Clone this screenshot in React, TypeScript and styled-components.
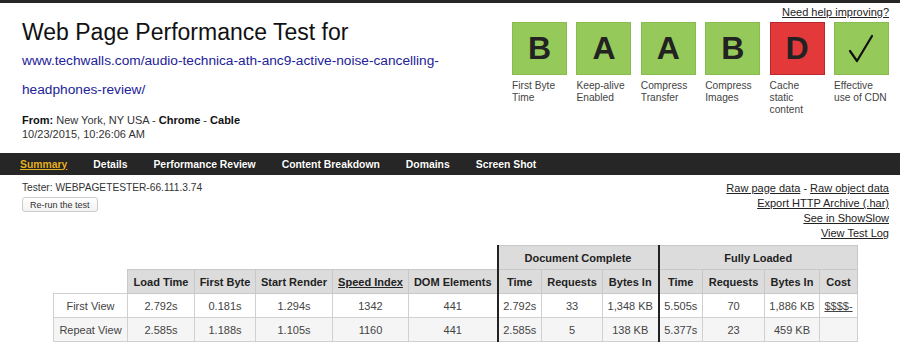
import styled, { createGlobalStyle } from 'styled-components';

const GlobalStyle = createGlobalStyle`
  body {
    margin: 0;
    background: #fff;
    font-family: "Liberation Sans", Arial, Helvetica, sans-serif;
    color: #222;
  }
`;

const Page = styled.div`
  border-top: 3px solid #262626;
`;

const Header = styled.div`
  height: 150px;
  display: flex;
  justify-content: space-between;
  padding: 0 11px 0 22px;
`;

const Intro = styled.div`
  display: flex;
  flex-direction: column;
`;

const Title = styled.h1`
  margin: 17px 0 0;
  font-size: 23px;
  line-height: 24px;
  font-weight: normal;
  color: #111;
`;

const Url = styled.a`
  display: block;
  width: 430px;
  margin-top: 2px;
  font-size: 13.7px;
  line-height: 29px;
  color: #222299;
  text-decoration: none;
`;

const Meta = styled.div`
  margin-top: 9px;
  font-size: 11px;
  line-height: 14px;
  color: #333;

  b {
    color: #111;
  }
`;

const Optimization = styled.div`
  display: flex;
  flex-direction: column;
  align-items: flex-end;
`;

const HelpLink = styled.a`
  margin-top: 3px;
  font-size: 11px;
  line-height: 13px;
  color: #222;
  text-decoration: underline;
`;

const Grades = styled.ul`
  display: flex;
  gap: 9.4px;
  margin: 3px 0 0;
  padding: 0;
  list-style: none;
`;

const Grade = styled.li`
  width: 55px;
`;

const GradeBox = styled.div<{ $bad?: boolean }>`
  box-sizing: border-box;
  height: 53px;
  display: flex;
  align-items: center;
  justify-content: center;
  background: ${(p) => (p.$bad ? '#e3393b' : '#95ca5a')};
  border: 1px solid ${(p) => (p.$bad ? '#b62a2c' : '#88bb50')};
  font-size: 32px;
  font-weight: bold;
  color: #222;
`;

const GradeLabel = styled.div`
  margin-top: 5px;
  font-size: 10.2px;
  line-height: 12px;
  color: #444;
`;

const Nav = styled.nav`
  height: 22px;
  display: flex;
  align-items: center;
  gap: 26px;
  padding-left: 20px;
  background: #262626;
`;

const NavItem = styled.a<{ $active?: boolean }>`
  font-size: 10.4px;
  font-weight: bold;
  color: ${(p) => (p.$active ? '#e6b325' : '#fff')};
  text-decoration: ${(p) => (p.$active ? 'underline' : 'none')};
  text-shadow: 0 0 1px rgba(0, 0, 0, 0.8);
`;

const Content = styled.div`
  padding: 6px 11px 0 22px;
`;

const InfoRow = styled.div`
  display: flex;
  justify-content: space-between;
`;

const Tester = styled.div`
  font-size: 10.2px;
  line-height: 14px;
  color: #333;
`;

const RerunButton = styled.button`
  display: block;
  margin-top: 2px;
  height: 15px;
  padding: 0 7px;
  font-family: inherit;
  font-size: 9px;
  color: #333;
  background: linear-gradient(#fff, #f2f2f2);
  border: 1px solid #ccc;
  border-radius: 3px;
`;

const Links = styled.div`
  display: flex;
  flex-direction: column;
  align-items: flex-end;
  font-size: 11px;
  line-height: 15px;
  color: #222;

  a {
    color: #222;
    text-decoration: underline;
  }
`;

const Results = styled.table`
  margin: 4px auto 0;
  border-collapse: collapse;
  table-layout: fixed;
  font-size: 11px;
`;

const Blank = styled.th`
  border: none;
  background: none;
`;

const Head = styled.th<{ $split?: boolean; $link?: boolean }>`
  height: 23px;
  padding: 0;
  background: #dcdcdc;
  border: 1px solid #c8c8c8;
  border-left: ${(p) => (p.$split ? '2px solid #222' : '1px solid #c8c8c8')};
  font-weight: bold;
  color: #222;
  text-align: center;
  white-space: nowrap;
  text-decoration: ${(p) => (p.$link ? 'underline' : 'none')};
`;

const Row = styled.tr<{ $alt?: boolean }>`
  background: ${(p) => (p.$alt ? '#f5f5f5' : '#fff')};
`;

const Cell = styled.td<{ $split?: boolean }>`
  height: 23px;
  padding: 0;
  border: 1px solid #d0d0d0;
  border-left: ${(p) => (p.$split ? '2px solid #222' : '1px solid #d0d0d0')};
  color: #444;
  text-align: center;
  white-space: nowrap;

  a {
    color: #444;
    text-decoration: underline;
  }
`;

const grades = [
  { grade: 'B', label: 'First Byte Time' },
  { grade: 'A', label: 'Keep-alive Enabled' },
  { grade: 'A', label: 'Compress Transfer' },
  { grade: 'B', label: 'Compress Images' },
  { grade: 'D', label: 'Cache static content', bad: true },
  { grade: 'check', label: 'Effective use of CDN' },
];

const tabs = ['Summary', 'Details', 'Performance Review', 'Content Breakdown', 'Domains', 'Screen Shot'];

const widths = [74, 67, 61, 77, 76, 89, 44, 61, 56, 44, 62, 55, 38];

const views = [
  {
    name: 'First View',
    values: ['2.792s', '0.181s', '1.294s', '1342', '441', '2.792s', '33', '1,348 KB', '5.505s', '70', '1,886 KB'],
    cost: '$$$$-',
  },
  {
    name: 'Repeat View',
    values: ['2.585s', '1.188s', '1.105s', '1160', '441', '2.585s', '5', '138 KB', '5.377s', '23', '459 KB'],
    cost: '',
  },
];

function Check() {
  return (
    <svg width="30" height="34" viewBox="0 0 30 34">
      <path d="M3 19 L10 29 L25 4" fill="none" stroke="#111" strokeWidth="2.2" strokeLinecap="round" strokeLinejoin="round" />
    </svg>
  );
}

export default function App() {
  return (
    <Page>
      <GlobalStyle />
      <Header>
        <Intro>
          <Title>Web Page Performance Test for</Title>
          <Url href="#">www.techwalls.com/audio-technica-ath-anc9-active-noise-cancelling-headphones-review/</Url>
          <Meta>
            <b>From:</b> New York, NY USA - <b>Chrome</b> - <b>Cable</b>
            <br />
            10/23/2015, 10:26:06 AM
          </Meta>
        </Intro>
        <Optimization>
          <HelpLink href="#">Need help improving?</HelpLink>
          <Grades>
            {grades.map((g) => (
              <Grade key={g.label}>
                <GradeBox $bad={g.bad}>{g.grade === 'check' ? <Check /> : g.grade}</GradeBox>
                <GradeLabel>{g.label}</GradeLabel>
              </Grade>
            ))}
          </Grades>
        </Optimization>
      </Header>

      <Nav>
        {tabs.map((t, i) => (
          <NavItem key={t} href="#" $active={i === 0}>
            {t}
          </NavItem>
        ))}
      </Nav>

      <Content>
        <InfoRow>
          <div>
            <Tester>Tester: WEBPAGETESTER-66.111.3.74</Tester>
            <RerunButton>Re-run the test</RerunButton>
          </div>
          <Links>
            <span>
              <a href="#">Raw page data</a> - <a href="#">Raw object data</a>
            </span>
            <a href="#">Export HTTP Archive (.har)</a>
            <a href="#">See in ShowSlow</a>
            <a href="#">View Test Log</a>
          </Links>
        </InfoRow>

        <Results>
          <colgroup>
            {widths.map((w, i) => (
              <col key={i} style={{ width: w }} />
            ))}
          </colgroup>
          <thead>
            <tr>
              <Blank colSpan={6} />
              <Head colSpan={3} $split>
                Document Complete
              </Head>
              <Head colSpan={4} $split>
                Fully Loaded
              </Head>
            </tr>
            <tr>
              <Blank />
              <Head>Load Time</Head>
              <Head>First Byte</Head>
              <Head>Start Render</Head>
              <Head $link>Speed Index</Head>
              <Head>DOM Elements</Head>
              <Head $split>Time</Head>
              <Head>Requests</Head>
              <Head>Bytes In</Head>
              <Head $split>Time</Head>
              <Head>Requests</Head>
              <Head>Bytes In</Head>
              <Head>Cost</Head>
            </tr>
          </thead>
          <tbody>
            {views.map((v, r) => (
              <Row key={v.name} $alt={r === 1}>
                <Cell>{v.name}</Cell>
                {v.values.map((val, i) => (
                  <Cell key={i} $split={i === 5 || i === 8}>
                    {val}
                  </Cell>
                ))}
                <Cell>{v.cost && <a href="#">{v.cost}</a>}</Cell>
              </Row>
            ))}
          </tbody>
        </Results>
      </Content>
    </Page>
  );
}
